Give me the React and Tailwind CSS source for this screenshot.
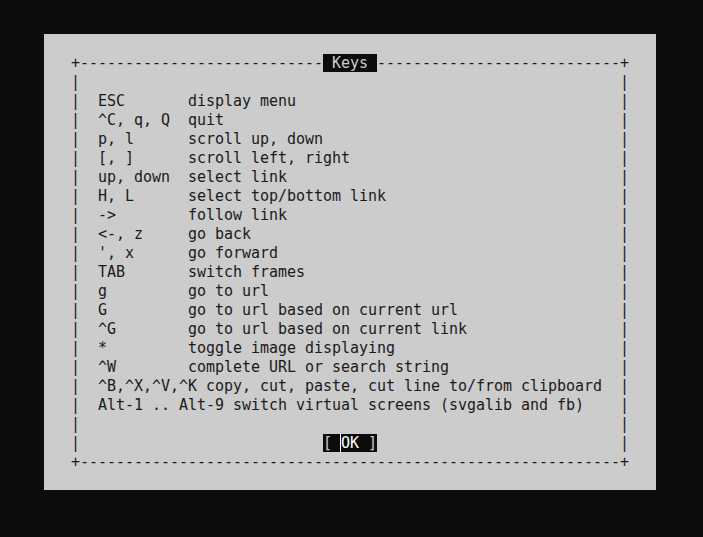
import React from "react";

// Keys help dialog, text-mode style (62 columns, 9px cells, 19px rows)
const KEYS = [
    ["ESC", "display menu"],
    ["^C, q, Q", "quit"],
    ["p, l", "scroll up, down"],
    ["[, ]", "scroll left, right"],
    ["up, down", "select link"],
    ["H, L", "select top/bottom link"],
    ["->", "follow link"],
    ["<-, z", "go back"],
    ["', x", "go forward"],
    ["TAB", "switch frames"],
    ["g", "go to url"],
    ["G", "go to url based on current url"],
    ["^G", "go to url based on current link"],
    ["*", "toggle image displaying"],
    ["^W", "complete URL or search string"],
];

const EXTRA = [
    "^B,^X,^V,^K copy, cut, paste, cut line to/from clipboard",
    "Alt-1 .. Alt-9 switch virtual screens (svgalib and fb)",
];

const WIDTH = 62;
const dashes = (n) => "-".repeat(n);

const boxLine = (inner) => {
    const text = "  " + inner;
    return "|" + text.padEnd(WIDTH - 2, " ") + "|";
};

const Row = ({ children }) => (
    <div className="h-[19px] leading-[19px] whitespace-pre">{children}</div>
);

const App = () => {
    const lines = [
        ...KEYS.map(([k, d]) => boxLine(k.padEnd(10, " ") + d)),
        ...EXTRA.map((t) => boxLine(t)),
    ];

    return (
        <div className="w-[703px] h-[537px] bg-[#0c0c0c] pt-[34px] pl-[44px]">
            <div
                className="w-[612px] h-[456px] bg-[#cccccc] pt-[20px] pl-[27px] text-[15px] tracking-[-0.03px] text-[#1a1a1a]"
                style={{ fontFamily: '"DejaVu Sans Mono", monospace' }}
            >
                {/* Bordure haute avec le titre */}
                <Row>
                    {"+" + dashes(27)}
                    <span className="bg-[#0c0c0c] text-[#cccccc]">{" Keys "}</span>
                    {dashes(27) + "+"}
                </Row>
                <Row>{boxLine("")}</Row>
                {lines.map((l, i) => (
                    <Row key={i}>{l}</Row>
                ))}
                <Row>{boxLine("")}</Row>
                {/* Bouton OK */}
                <Row>
                    {"|" + " ".repeat(27)}
                    <span className="bg-[#0c0c0c] text-[#cccccc]">
                        {"[ "}
                        <span className="relative text-white">
                            OK
                            <span className="absolute left-[-1px] top-[-1px] h-[19px] w-px bg-white" />
                        </span>
                        {" ]"}
                    </span>
                    {" ".repeat(27) + "|"}
                </Row>
                <Row>{"+" + dashes(60) + "+"}</Row>
            </div>
        </div>
    );
};

export default App;
